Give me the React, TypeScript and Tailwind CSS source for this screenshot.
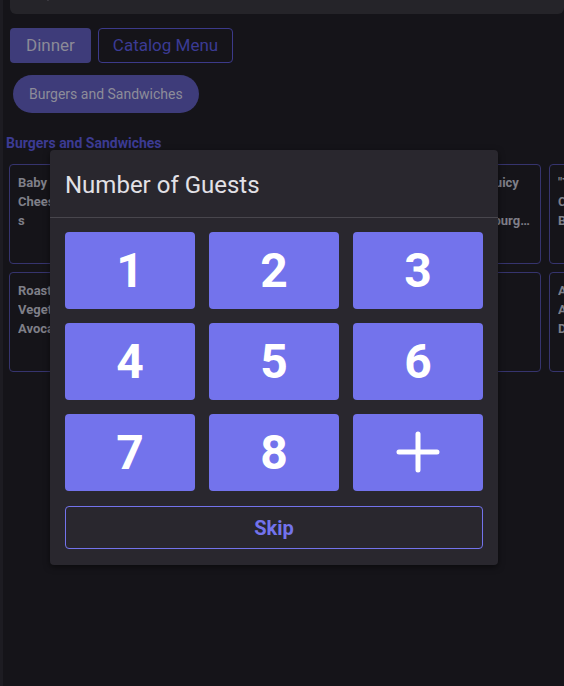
import { Search } from "lucide-react";

const rowOne = [
  "Baby Cheeseburgers",
  "Classic Smash Burger",
  "Crispy Chicken Sandwich",
  "BBQ Pulled Pork",
  "Super Juicy Bacon Cheeseburger Deluxe",
  "\"Triple Cheese Bacon\" Burger",
];

const rowTwo = [
  "Roast Vegetable Avocado Wrap",
  "Grilled Cheese",
  "Philly Cheesesteak",
  "Fish Sandwich",
  "Turkey Burger",
  "Ahi Tuna Avocado Delight",
];

const keys = ["1", "2", "3", "4", "5", "6", "7", "8"];

function ItemCard({ name }: { name: string }) {
  return (
    <div className="h-[100px] w-[100px] shrink-0 rounded-[4px] border border-[#36346e] px-2 pt-[8px]">
      <p className="line-clamp-3 break-words text-[13px] font-bold leading-[19px] text-[#7f7f88]">{name}</p>
    </div>
  );
}

export default function App() {
  return (
    <div
      className="relative h-[686px] w-[564px] overflow-hidden border-l-[3px] border-[#1d1c22] bg-[#151419]"
      style={{ fontFamily: "Roboto, 'Liberation Sans', sans-serif" }}
    >
      {/* search bar, scrolled mostly out of view */}
      <div className="ml-[7px] h-[14px] overflow-hidden">
        <div className="-mt-[26px] flex h-[40px] items-center gap-4 rounded-b-[6px] bg-[#252429] px-6 text-[#55545c]">
          <Search size={16} />
          <span className="text-[15px]">Search</span>
        </div>
      </div>

      <div className="flex gap-[7px] pl-[7px] pt-[14px]">
        <button className="h-[35px] rounded-[4px] bg-[#3e3c7a] px-[16px] text-[17px] text-[#8b8a97]">Dinner</button>
        <button className="h-[35px] rounded-[4px] border border-[#3c3a8a] px-[14px] text-[17px] text-[#3b3b94]">
          Catalog Menu
        </button>
      </div>

      <div className="pl-[10px] pt-[12px]">
        <button className="h-[38px] rounded-full bg-[#3e3c7a] px-[16px] text-[14px] text-[#8d8c99]">
          Burgers and Sandwiches
        </button>
      </div>

      <h3 className="pl-[3px] pt-[22px] text-[14px] font-bold leading-[16px] text-[#3c3b93]">Burgers and Sandwiches</h3>

      <div className="flex flex-col gap-2 pl-[6px] pt-[13px]">
        <div className="flex gap-2">
          {rowOne.map((n) => (
            <ItemCard key={n} name={n} />
          ))}
        </div>
        <div className="flex gap-2">
          {rowTwo.map((n) => (
            <ItemCard key={n} name={n} />
          ))}
        </div>
      </div>

      {/* Guests dialog */}
      <div className="absolute left-[47px] top-[150px] w-[448px] rounded-[4px] bg-[#29272e] shadow-[0_2px_6px_rgba(0,0,0,0.5)]">
        <div className="flex h-[68px] items-center border-b border-[#48464d] px-[15px] pt-[2px]">
          <h2 className="text-[24px] leading-none text-[#e2e1e6]">Number of Guests</h2>
        </div>
        <div className="px-[15px] pb-[16px] pt-[14px]">
          <div className="grid grid-cols-3 gap-x-[14px] gap-y-[14px]">
            {keys.map((k) => (
              <button
                key={k}
                className="flex h-[77px] items-center justify-center rounded-[4px] bg-[#7373ec] text-[48px] font-bold leading-none text-white"
              >
                {k}
              </button>
            ))}
            <button className="flex h-[77px] items-center justify-center rounded-[4px] bg-[#7373ec] text-white">
              <svg width="44" height="44" viewBox="0 0 44 44" fill="none" stroke="currentColor" strokeWidth="5" strokeLinecap="round">
                <path d="M22 3v36M3 21h38" />
              </svg>
            </button>
          </div>
          <button className="mt-[15px] flex h-[43px] w-full items-center justify-center rounded-[4px] border border-[#7373ec] text-[20px] font-bold text-[#7373ec]">
            Skip
          </button>
        </div>
      </div>
    </div>
  );
}
